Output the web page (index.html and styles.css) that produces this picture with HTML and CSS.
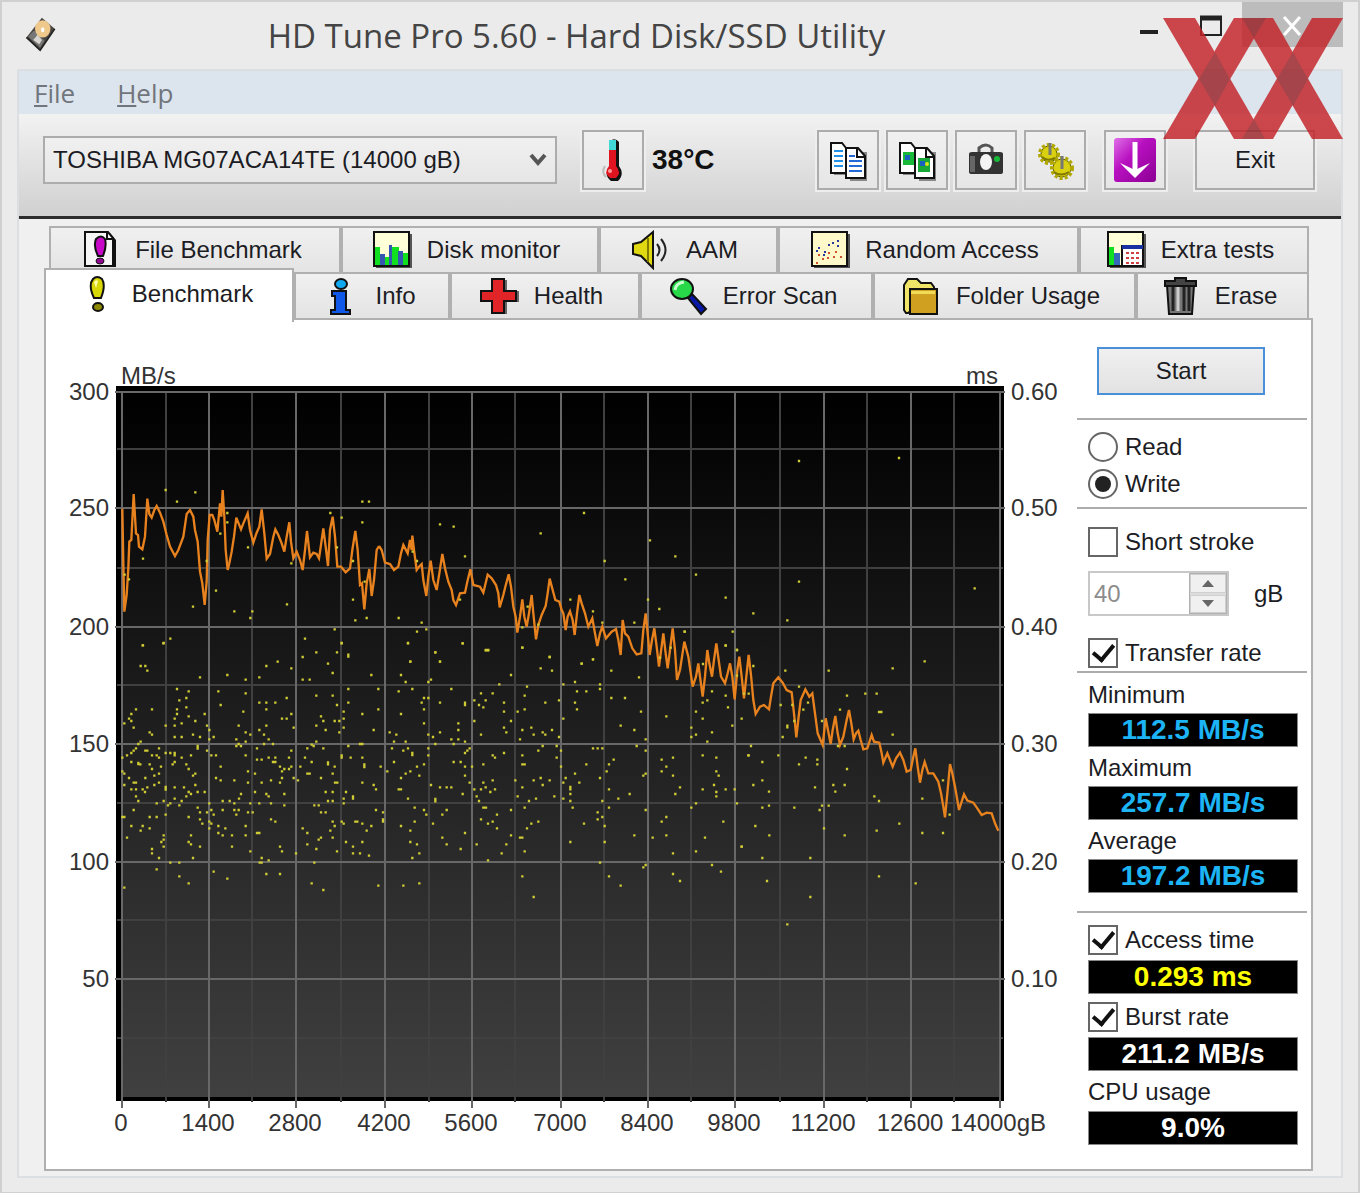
FILE: index.html
```html
<!DOCTYPE html>
<html lang="en">
<head>
<meta charset="utf-8">
<title>HD Tune Pro 5.60 - Hard Disk/SSD Utility</title>
<link rel="stylesheet" href="styles.css">
</head>
<body>
<div class="window">
  <header class="titlebar">
    <svg class="app-icon" viewBox="0 0 36 42" aria-hidden="true">
      <path d="M19 2L34 15 17 40 1 25z" fill="#4a4644"/>
      <path d="M3 24L17 37l5-8-12-12z" fill="#777"/>
      <path d="M9 28l5-6 5 6-3 5z" fill="#d8d4d0"/>
      <ellipse cx="20" cy="15" rx="9" ry="10" fill="#efc98c"/>
      <ellipse cx="20" cy="16" rx="2" ry="3" fill="#fff"/>
      <path d="M1 25l16 15L34 15" fill="none" stroke="#222" stroke-width="2"/>
    </svg>
    <h1>HD Tune Pro 5.60 - Hard Disk/SSD Utility</h1>
    <div class="window-buttons">
      <button type="button" aria-label="Minimize"><svg viewBox="0 0 24 24"><path d="M3 19h18" stroke="#222" stroke-width="4"/></svg></button>
      <button type="button" aria-label="Maximize"><svg viewBox="0 0 24 24"><path d="M2 4h20v18H2z" fill="none" stroke="#222" stroke-width="2"/><path d="M1 5h22" stroke="#222" stroke-width="5"/></svg></button>
      <button type="button" class="close" aria-label="Close"><svg viewBox="0 0 24 24"><path d="M4 4l16 18M20 4L4 22" stroke="#fff" stroke-width="3"/></svg></button>
    </div>
  </header>

  <div class="client">
    <nav class="menubar">
      <a href="#file"><u>F</u>ile</a>
      <a href="#help"><u>H</u>elp</a>
    </nav>

    <div class="toolbar">
      <select class="drive" aria-label="Drive"><option>TOSHIBA MG07ACA14TE (14000 gB)</option></select>
      <button type="button" class="tool" aria-label="Temperature">
        <svg viewBox="0 0 40 44"><path d="M17 3q5-4 9 1v24q6 8-1 15h-7q-8-6-1-15z" fill="#111"/><path d="M16 2h7v12h-7z" fill="#42d8d8"/><path d="M16 12h7v16q6 7 0 12h-6q-7-5-1-12z" fill="#e01420"/><path d="M12 28q-4 6 1 11" stroke="#bbb" stroke-width="2" fill="none"/><circle cx="17" cy="33" r="2" fill="#ff9a9a"/></svg>
      </button>
      <output class="temperature">38°C</output>
      <div class="tools">
        <button type="button" class="tool" aria-label="Copy text">
          <svg viewBox="0 0 40 44"><path d="M6 9h14v28H6zM22 14h17v29H22z" fill="#888"/><path d="M3 5h11l4 5v25H3z" fill="#fff" stroke="#111" stroke-width="2"/><path d="M6 13h9M6 18h9M6 23h9M6 28h9" stroke="#2090e8" stroke-width="2"/><path d="M18 10h12l7 8v22H18z" fill="#fff" stroke="#111" stroke-width="2"/><path d="M29 10v9h8" fill="none" stroke="#111" stroke-width="2"/><path d="M21 18h6M21 23h13M21 28h13M21 33h13" stroke="#2468d8" stroke-width="2"/></svg>
        </button>
        <button type="button" class="tool" aria-label="Copy screenshot">
          <svg viewBox="0 0 40 44"><path d="M6 9h14v28H6zM22 14h17v29H22z" fill="#888"/><path d="M3 5h11l4 5v25H3z" fill="#fff" stroke="#111" stroke-width="2"/><path d="M6 14h11v13H6z" fill="#18b838"/><path d="M8 17h5v5H8z" fill="#1a60c0"/><path d="M18 10h12l7 8v22H18z" fill="#fff" stroke="#111" stroke-width="2"/><path d="M29 10v9h8" fill="none" stroke="#111" stroke-width="2"/><path d="M21 20h12v14H21z" fill="#18a838"/><path d="M23 23h5v5h-5z" fill="#1a60c0"/><circle cx="30" cy="26" r="2" fill="#d8e020"/></svg>
        </button>
        <button type="button" class="tool" aria-label="Save screenshot">
          <svg viewBox="0 0 40 44"><path d="M13 14v-4q7-6 13 0v4" fill="none" stroke="#555" stroke-width="3"/><path d="M3 16q0-2 3-2h28q3 0 3 2v18q0 2-3 2H6q-3 0-3-2z" fill="#333"/><path d="M4 18h5v16H4z" fill="#666"/><ellipse cx="20" cy="24" rx="6" ry="8" fill="#f4f4f4"/><circle cx="31" cy="21" r="3" fill="#18b838"/></svg>
        </button>
        <button type="button" class="tool" aria-label="Options">
          <svg viewBox="0 0 40 44"><g fill="#d8d010" stroke="#5a5600"><circle cx="14" cy="16" r="8"/><circle cx="27" cy="30" r="9"/></g><g fill="none" stroke="#b0a800" stroke-width="4" stroke-dasharray="3 2"><circle cx="14" cy="16" r="9"/><circle cx="27" cy="30" r="10"/></g><path d="M15 5v12M27 18v13" stroke="#777" stroke-width="3"/><path d="M7 19q5 5 13 1M19 34q7 5 15 0" fill="none" stroke="#807800" stroke-width="2"/></svg>
        </button>
        <button type="button" class="tool spaced" aria-label="Minimize to tray">
          <svg class="wide" viewBox="0 0 44 46"><defs><linearGradient id="violet" x2="1" y2="1"><stop offset="0" stop-color="#e070e8"/><stop offset=".4" stop-color="#b810c0"/><stop offset="1" stop-color="#8c0094"/></linearGradient></defs><rect x="1" y="1" width="42" height="44" rx="3" fill="url(#violet)"/><path d="M22 5v31" stroke="#fff" stroke-width="5"/><path d="M7 26l15 7 15-7-15 15z" fill="#fff"/></svg>
        </button>
        <button type="button" class="exit">Exit</button>
      </div>
    </div>

    <main class="content">
      <div class="tabs back" role="tablist" aria-label="More tests">
        <button type="button" role="tab">
          <svg viewBox="0 0 40 40"><path d="M6 3h24l6 7v27H6z" fill="#111"/><path d="M5 2h23l5 6v28H5z" fill="#f6f6f6" stroke="#111" stroke-width="2"/><path d="M27 2v7h6" fill="none" stroke="#111" stroke-width="2"/><path d="M16 9q5-5 9 0 2 7-2 17h-5q-5-10-2-17z" fill="#c808c8" stroke="#111" stroke-width="2"/><ellipse cx="20" cy="31" rx="4" ry="3" fill="#900890" stroke="#111"/></svg>
          File Benchmark</button>
        <button type="button" role="tab">
          <svg viewBox="0 0 40 40"><path d="M4 4h36v34H4z" fill="#555"/><path d="M2 2h35v34H2z" fill="#ffffd8" stroke="#111" stroke-width="2"/><path d="M3 17h5v18H3zM12 27h6v8h-6zM19 17h8v18h-8zM31 23h5v12h-5z" fill="#10e020"/><path d="M8 24h5v11H8zM17 15h3v20h-3zM26 21h5v14h-5z" fill="#3458b0"/></svg>
          Disk monitor</button>
        <button type="button" role="tab">
          <svg viewBox="0 0 40 40"><path d="M2 14l8-2L22 2v36L10 26l-8-2z" fill="#e0d810" stroke="#111" stroke-width="2"/><path d="M17 8v24" stroke="#827c00" stroke-width="2"/><path d="M26 14q5 6 0 12M30 9q9 11 0 22" fill="none" stroke="#222" stroke-width="2"/></svg>
          AAM</button>
        <button type="button" role="tab">
          <svg viewBox="0 0 40 40"><path d="M4 4h36v34H4z" fill="#555"/><path d="M2 2h35v34H2z" fill="#fff8c8" stroke="#111" stroke-width="2"/><path d="M9 18h0M15 22h0M19 15h0M23 13h0M28 11h0M14 25h0M28 16h0M7 21h0" stroke="#2838a0" stroke-width="2" stroke-linecap="square"/><path d="M7 33h0M13 29h0M18 28h0M19 23h0M26 22h0M24 27h0M31 27h0M9 25h0" stroke="#d05030" stroke-width="2" stroke-linecap="square"/></svg>
          Random Access</button>
        <button type="button" role="tab">
          <svg viewBox="0 0 40 40"><path d="M4 4h36v34H4z" fill="#555"/><path d="M2 2h35v34H2z" fill="#ffffd8" stroke="#111" stroke-width="2"/><path d="M3 17h5v18H3z" fill="#10e020"/><path d="M8 23h6v12H8z" fill="#3468b8"/><path d="M16 16h21v20H16z" fill="#fff" stroke="#111" stroke-width="2"/><path d="M16 17h21" stroke="#1830a0" stroke-width="4"/><path d="M20 23h14M20 28h14M20 33h14" stroke="#d04040" stroke-width="2" stroke-dasharray="3 2"/></svg>
          Extra tests</button>
      </div>
      <div class="tabs front" role="tablist" aria-label="Tests">
        <button type="button" role="tab" class="active" aria-selected="true">
          <svg viewBox="0 0 40 40"><path d="M16 5q4-4 9 0 4 6-1 19h-7q-6-13-1-19z" fill="#d8d808" stroke="#111" stroke-width="2"/><path d="M17 8q2-3 4-1l-2 7z" fill="#ffffb0"/><ellipse cx="21" cy="33" rx="5" ry="4" fill="#8c8800" stroke="#111" stroke-width="2"/></svg>
          Benchmark</button>
        <button type="button" role="tab">
          <svg viewBox="0 0 40 40"><ellipse cx="21" cy="8" rx="6" ry="5" fill="#10a8f0" stroke="#111" stroke-width="2"/><path d="M12 15h14v19h4v4H11v-4h4V20h-3z" fill="#1058e8" stroke="#111" stroke-width="2"/></svg>
          Info</button>
        <button type="button" role="tab">
          <svg viewBox="0 0 40 40"><path d="M14 4h14v11h12v11H28v12H16V26H4V15h10z" fill="#666"/><path d="M13 3h12v12h12v10H25v12H13V25H2V15h11z" fill="#e02428" stroke="#111" stroke-width="2"/></svg>
          Health</button>
        <button type="button" role="tab">
          <svg viewBox="0 0 40 40"><path d="M20 22l4-4 14 15-5 5z" fill="#0818a8" stroke="#111" stroke-width="2"/><ellipse cx="14" cy="13" rx="11" ry="10" fill="#28d848" stroke="#111" stroke-width="2"/><path d="M7 14q1-7 9-8" fill="none" stroke="#c8ffd0" stroke-width="3"/></svg>
          Error Scan</button>
        <button type="button" role="tab">
          <svg viewBox="0 0 40 40"><path d="M7 37h-2l-2-3V9l4-6h9l4 4h10l3 4v6z" fill="#f0e468" stroke="#111" stroke-width="2"/><path d="M9 13h27v25H9z" fill="#d0a020" stroke="#111" stroke-width="2"/><path d="M10 15h24v3H10z" fill="#f0dc58"/></svg>
          Folder Usage</button>
        <button type="button" role="tab">
          <svg viewBox="0 0 40 40"><path d="M7 9h27l-2 29H9z" fill="#777" stroke="#111" stroke-width="2"/><path d="M13 11v24M24 11v24M29 11v24" stroke="#222" stroke-width="3"/><path d="M18 11v24" stroke="#ccc" stroke-width="3"/><path d="M5 5h10V2h11v3h10v5H5z" fill="#444" stroke="#111" stroke-width="2"/></svg>
          Erase</button>
      </div>

      <section class="panel">
        <svg class="chart" viewBox="46 320 1031 847" role="img" aria-label="Transfer rate and access time over disk position">
          <defs><linearGradient id="plot" x2="0" y2="1"><stop offset="0" stop-color="#000"/><stop offset="1" stop-color="#404040"/></linearGradient></defs>
          <rect x="116" y="386" width="888" height="715"/>
          <rect x="122" y="391" width="878" height="706" fill="url(#plot)"/>
          <path class="minor" d="M166 391v711M252 391v711M341 391v711M429 391v711M515 391v711M604 391v711M691 391v711M780 391v711M867 391v711M954 391v711M117 449h886M117 568h886M117 685h886M117 803h886M117 920h886M117 1038h886"/>
          <path class="major" d="M122 391v717M209 391v717M296 391v717M385 391v717M472 391v717M561 391v717M648 391v717M735 391v717M824 391v717M911 391v717M1000 391v717M115 392h890M115 508h890M115 627h890M115 744h890M115 862h890M115 979h890"/>
          <!-- Samples use a grid three times finer than the axes, one group per zone. -->
          <g class="rate">
            <path transform="translate(60 350) scale(.33333)" d="M187 476L190 640 193 785 200 735 205 655 208 575 214 570 221 432 228 550 234 555 237 590 247 598 255 560 262 446 268 492 275 503 283 480 290 468 300 488 310 515 320 555 330 590 345 618 355 600 370 560 380 492 390 480 400 500 405 540 413 575 420 665 427 700 434 765 440 695 443 570 449 495 457 495 463 510 472 545 480 460 484 500 488 420 493 500 497 600 503 660 508 640 515 605 522 560 529 503 543 538 550 520 563 490 570 540 580 578 590 548 598 530 605 478 613 550 620 626 630 612 640 560 646 538 655 555 665 580 673 605 680 560 688 517 693 575 700 625 710 605 720 630 728 660 735 600 741 543 750 622 760 608 770 612 777 625 783 585 790 535 797 590 804 648 810 540 818 500 825 560 832 650 843 650 857 667 870 655 877 600 886 543 893 600 900 705 906 700 913 778 920 700 928 657 935 738 942 690 950 600 957 588"/>
            <path transform="translate(370 470) scale(.33333)" d="M27 228L35 240 45 278 60 282 72 300 85 290 93 250 100 225 113 250 120 210 125 240 127 197 132 240 140 300 147 290 155 282 160 330 169 378 175 320 182 272 190 330 200 360 208 310 217 252 225 295 235 335 245 360 250 390 258 405 270 370 285 368 292 335 301 298 310 345 330 350 340 368 353 314 365 325 378 345 385 370 389 412 400 375 406 350 416 313 423 350 430 410 437 440 442 488 450 440 457 388 463 440 470 470 477 430 485 375 490 430 498 508 505 465 515 435 527 408 533 370 539 326 548 360 556 390 568 395 575 420 580 430 587 480 593 440 600 424 608 450 614 495 621 430 628 375 635 400 645 430 655 470 667 445 675 490 682 528 690 490 697 470 708 505 725 485 738 477 745 510 752 555 758 450 765 490 775 500 787 535 800 553 814 550 820 480 827 430 835 510 839 555 846 510 853 475 860 530 867 590 880 490 887 550 893 595 900 540 908 475 915 540 921 630 930 600"/>
            <path transform="translate(680 560) scale(.33333)" d="M0 330L13 245 25 290 38 380 48 350 55 310 60 350 68 410 75 350 82 270 88 310 96 350 102 300 109 250 116 300 123 350 135 370 143 340 150 310 157 350 164 418 172 330 178 290 185 350 192 415 199 350 206 285 213 345 220 420 227 462 240 440 252 435 267 448 273 410 280 370 295 352 308 368 320 390 335 397 343 470 349 532 356 470 362 420 376 388 388 410 397 400 405 460 413 520 428 555 437 475 444 510 452 552 458 510 466 468 473 520 480 555 490 530 500 480 507 450 514 490 521 538 528 520 535 512 542 540 550 568 562 565 575 525 582 545 598 548 605 580 610 608 622 580 638 620 648 595 660 578 670 600 680 635 692 630 700 590 706 565 713 620 720 668 727 630 734 606 745 640 760 640 775 665 783 700 790 740 795 772 802 700 810 612 817 640 825 680 832 720 837 750 845 725 852 703 862 722 880 728 892 745 905 765 920 758 935 760 945 790 955 812"/>
          </g>
          <g class="access">
            <path transform="translate(60 350) scale(.33333)" d="M317 420h0M351 455h0M406 427h0M502 489h0M502 517h0M481 551h0M564 592h0M249 626h0M194 674h0M207 688h0M440 633h0M468 722h0M399 770h0M523 784h0M577 784h0M571 804h0M681 763h0M694 640h0M811 489h0M845 503h0M831 592h0M879 633h0M907 455h0M927 455h0M907 517h0M914 695h0M879 749h0M886 811h0M920 804h0M824 838h0M735 866h0M845 880h0M249 886h0M310 880h0M331 866h0"/>
            <path transform="translate(370 470) scale(.33333)" d="M210 163h0M251 170h0M285 259h0M128 245h0M141 273h0M86 444h0M155 458h0M141 485h0M169 478h0M114 520h0M196 547h0M121 575h0M210 575h0M278 520h0M270 389h0M347 541h7M457 472h0M473 410h0M505 464h0M457 533h0M539 561h0M512 190h0M642 129h0M704 273h0M766 328h0M601 389h0M669 424h0M697 458h0M793 458h0M635 581h0M669 568h0M840 211h0M916 259h0M834 389h0M868 417h0M944 485h0M902 533h0M870 563h0M1287 -27h0M1587 -36h0"/>
            <path transform="translate(680 560) scale(.33333)" d="M48 44h0M137 113h0M220 160h0M357 65h0M322 181h0M884 85h0M14 215h0M158 215h0M137 257h0M171 270h0M69 312h0M220 318h0M316 332h0M446 332h0M638 325h0M734 304h0M171 347h0M357 380h0M302 435h0M192 401h0M206 401h0M384 428h0M370 449h0M337 435h0M343 483h0M322 497v5M308 531h0M501 407h0M556 401h0M590 401h0M597 456h7M480 449h0M426 483h0M638 524h0M474 558h0M494 558h0M501 627h0M295 586h0M357 613h0M377 593h0M412 599h0M412 613h0M405 682h0M460 675h0M494 675h0M466 695h0M583 709h0M597 723h0M727 716h0M789 661h0M809 764h0M727 819h0M789 819h0M658 791h0M590 812h0M494 826h0M432 805h0M419 750h0M426 737h0M446 737h0M343 743h0M268 826h0M267 695h0M247 606h0M247 661h0M220 675h0M247 743h0M267 737h0M226 798h0M213 558h0M206 586h0"/>
            <path transform="translate(740 840) scale(.33333)" d="M5 20h0M67 54h0M211 54h0M81 123h0M211 171h0M142 253h0M417 109h0M527 130h0"/>
            <path transform="translate(110 640) scale(.33333)" d="M98 16h0M161 9h0M92 78h0M106 78h0M112 92h0M270 112h0M352 105h0M407 119h0M448 112h0M469 78h0M503 65h0M544 85h0M578 51h0M619 37h0M681 37h0M695 9h0M715 44v6M654 71h0M668 99h0M578 119h0M599 119h0M784 105h0M894 9h0M901 65h0M873 105h0M887 126h0M955 126h0M201 147h0M236 154h0M229 174h0M208 181h0M229 202h0M201 208h0M201 222h0M194 236h0M236 229h0M256 243h0M215 250h0M194 257h0M167 257h0M284 222h0M291 257h0M298 270h0M78 208h0M126 208h0M64 222h0M57 236h0M64 243h0M43 250h0M71 263h0M119 277h0M126 284h0M194 291h0M215 291h0M249 284h0M270 291h0M311 291h0M298 298h0M325 154h0M407 160h0M332 195h0M400 215h0M386 257h0M407 277h0M421 284h0M448 188h0M469 188h0M496 188h0M530 174h0M469 208h0M544 222h0M516 236h0M530 236h0M469 257h0M448 270h0M462 284h0M476 298h0M551 263h0M619 167h0M668 167h0M715 147h0M805 147h0M681 195h0M715 188h0M701 215h0M757 222h0M805 208h0M633 229h0M640 243h0M619 257h0M674 243h0M688 243h0M701 236h0M701 263h0M688 277h0M647 270h0M791 270h0M866 154h0M907 147h0M942 174h0M955 174h0M935 188h0M942 208h0M873 222h0M942 250h0M839 277h0M859 284h0M955 284h0M852 305h0M887 305h0M92 305h0M85 312h0M78 325h0M71 332h0M64 339h0M51 346h0M37 353h0M106 332h6M147 325h0M126 346h0M140 346h0M147 353h0M167 339h0M181 339h0M194 339v7M215 353h0M243 346h0M263 318v8M291 332h0M304 346h0M318 346h0M64 366h0M85 369v3M91 373h0M119 373h0M126 387h0M153 380h0M188 373h0M194 366h0M229 373h0M236 387h0M332 380h0M37 394h0M43 401h0M57 414h0M106 414h0M133 407h0M147 401h0M249 407h0M256 401h0M318 414h0M332 421h0M373 421h0M71 428h7M43 435h0M64 448h0M78 448h0M98 448h0M112 442h0M133 435h0M147 428h0M105 456h0M78 469h0M167 441v8M194 442h0M222 442h0M256 435h0M263 456h0M236 456h0M243 462h0M229 469h0M284 456h0M194 476h0M215 483h0M208 496h0M85 483h0M161 483h0M140 490h0M174 496h0M181 490h0M298 490h0M338 483h0M359 483h0M373 490h0M387 476h0M393 462h0M421 490h0M448 490h0M483 490h0M379 298h0M379 318h0M386 312h0M393 318h0M407 305h0M407 346h0M462 312h0M489 312h0M441 325h0M441 359h0M455 359h0M476 353h0M496 353h0M489 366h7M510 380h0M523 387h0M516 394h0M537 387h0M544 380h0M537 353h0M544 332h0M571 380h0M414 394h0M435 401h0M414 428h0M455 428h0M483 421h0M516 414h0M510 428h0M551 414h0M564 421h0M435 456h0M469 462h0M476 469h0M523 462h0M523 496h0M619 305h0M605 314h0M611 318h0M592 325h0M585 353h0M605 366h0M640 325h0M715 318h0M750 312h7M695 346v7M722 353h0M757 353h0M654 367v6M674 380h0M763 373v8M592 401h7M633 414h0M668 401h0M675 428h7M757 428h0M791 435h0M798 448h0M812 380h0M832 394h0M647 456h0M668 456h0M708 456h0M729 469v7M701 476h0M701 490h0M654 483h0M668 483h0M613 496h0M626 496h0M633 517h0M647 517h0M846 325h0M880 332h0M894 325h0M907 339v6M955 325h0M955 346h0M852 366h0M942 373h0M921 380h0M928 407h0M901 394h0M887 401h0M873 414h0M866 448h7M894 476h0M914 503h0M942 510h0M949 524h0M914 545h0M798 510h0M819 517h0M819 538v7M71 510h0M37 531h6M119 531h0M140 531h0M167 524h0M236 531h0M263 503h0M270 517h0M291 517h0M304 510h0M311 524h0M270 538h0M277 551h0M298 545h0M304 551h0M298 565h0M338 510h0M373 510h0M386 510h0M379 524h0M414 517h0M428 517h0M483 538h0M496 545h0M325 558h0M346 565h0M325 579h0M338 586h0M366 586h0M407 558h0M407 586h0M441 579h7M64 558h0M98 558h0M92 572h0M119 565h0M51 593h0M161 586h0M161 599h0M154 606h0M161 620h0M126 627h0M126 640h0M147 654h0M181 668h0M208 668h0M249 654h0M243 586h0M236 606h0M243 613h0M270 620h0M366 620h0M421 634h0M455 654h0M449 668h6M476 661h0M510 620h0M516 634h0M558 640h0M578 565h0M592 579h0M592 613h0M619 627h0M626 599h0M633 593h0M661 572h0M668 593h0M674 558h0M668 545h0M695 545h0M701 551h0M736 545h6M757 551h0M784 558h0M770 572h0M708 606h0M757 606h0M729 620h0M681 634h0M729 640h0M750 640h0M777 647h0M613 668h0M873 558h0M901 572h0M901 606h0M921 613h0M928 640h0M907 654h0M140 688h0M208 709h0M236 730h0M311 695h0M352 716h0M469 702h0M510 702h0M605 730h0M640 750h0M805 737h0M880 737h0M928 730h0M43 743h0"/>
            <path transform="translate(430 640) scale(.33333)" d="M98 10h0M168 30h7M16 37h0M30 65h0M277 23h0M359 51h0M332 85h0M366 92h0M455 71h0M489 58h0M243 105h0M3 119h0M544 92h0M627 112h0M64 147h0M208 133h0M291 140h0M400 133h0M435 126h0M510 133h0M510 147h0M153 160h0M188 160h0M284 167h0M441 154h0M469 154h0M544 174h0M585 174h0M30 188h0M105 188v7M133 181h0M167 181h0M147 195h0M160 202h0M222 188h0M346 188h0M387 181h0M435 188h0M441 208h0M222 215h0M263 215h0M284 208h0M633 215h0M709 229h0M85 250h0M133 243h0M243 243h0M400 236h0M30 277h0M85 270h0M222 263h0M229 277h0M277 270h0M304 263h0M311 284h0M338 277h0M346 284h0M366 270h0M153 284h0M9 291h0M64 298h0M85 298h0M105 305h0M71 312h0M16 312h0M270 298h0M387 291h0M572 257h0M613 270h0M647 298h0M338 318h0M325 332h0M380 318h0M393 332h0M489 325h0M503 325h0M517 325h0M620 318h0M647 332h0M119 325h0M112 332h0M105 339h0M222 339h0M188 346h0M195 353h0M277 346h0M380 353h0M71 366h0M92 366h0M105 380h0M126 380h0M160 373h0M277 373h7M393 380h0M469 373h0M537 373h0M551 359h0M530 394h0M105 407h0M435 401h0M407 414h0M400 428h0M448 428h0M510 414h0M119 428h0M160 428h0M188 421h0M256 421h0M311 421h0M332 414h0M359 421h0M338 435h0M640 407h0M647 401h0M3 435h0M30 442h0M50 442h0M64 442h0M133 448h0M153 448h0M167 442h0M195 448h0M181 456h0M277 442h0M421 441v7M421 462h0M537 448h0M98 462h0M140 469h0M263 469h0M373 469h0M400 476h0M599 462h0M565 476h0M16 477v7M147 483h0M297 483h0M318 476h0M421 483h0M517 483h0M160 503h8M243 510h0M284 503h0M428 503h0M537 503h0M50 510h0M37 524h0M201 524h0M153 538h0M9 551h0M174 551h0M188 545h0M503 517h0M517 531h0M503 538h0M524 558h0M325 545h0M304 551h0M291 565h0M201 565h0M462 551h0M105 579h0M37 593h0M243 586h0M270 593h7M613 586h0M668 593h0M50 613h0M140 613h0M229 613h0M421 606h0M524 606h0M92 627h0M215 640h0M284 634h0M174 661h0M510 668h0M277 709h0M311 771h0M537 709h0M572 737h0M647 675h0M640 682h0M729 702h0M750 723h0M846 675h0M873 695h0M729 640h0M798 634h0M647 510h0M695 545h0M709 531h0M709 586h0M825 593h0M880 545h0M935 620h0M784 503h0M798 490h0M921 490h0M914 448h0M887 448h0M859 456h0M859 469h0M852 435h0M866 407h0M859 394h0M859 353h0M818 346h0M818 448h0M736 462h0M750 442h0M729 407h0M695 394h0M709 380h0M695 359h0M729 353h0M832 305h0M784 291h0M798 284h0M784 263h0M846 277h0M818 236h0M798 215h0M907 257h0M935 236h0M894 202h0M887 167h0M846 154h0M818 188h0M832 181h0M887 16h0M921 30h0M955 346h0"/>
          </g>
          <g class="units"><text x="121" y="384">MB/s</text><text x="998" y="384" text-anchor="end">ms</text></g>
          <g class="left-scale"><text x="109" y="400">300</text><text x="109" y="516">250</text><text x="109" y="635">200</text><text x="109" y="752">150</text><text x="109" y="870">100</text><text x="109" y="987">50</text></g>
          <g class="right-scale"><text x="1011" y="400">0.60</text><text x="1011" y="516">0.50</text><text x="1011" y="635">0.40</text><text x="1011" y="752">0.30</text><text x="1011" y="870">0.20</text><text x="1011" y="987">0.10</text></g>
          <g class="bottom-scale"><text x="121" y="1131">0</text><text x="208" y="1131">1400</text><text x="295" y="1131">2800</text><text x="384" y="1131">4200</text><text x="471" y="1131">5600</text><text x="560" y="1131">7000</text><text x="647" y="1131">8400</text><text x="734" y="1131">9800</text><text x="823" y="1131">11200</text><text x="910" y="1131">12600</text><text x="998" y="1131">14000gB</text></g>
        </svg>

        <form class="side">
          <button type="button" class="start">Start</button>
          <div class="group">
            <label class="check"><input type="radio" name="mode">Read</label>
            <label class="check"><input type="radio" name="mode" checked>Write</label>
          </div>
          <div class="group stroke">
            <label class="check"><input type="checkbox">Short stroke</label>
            <div class="spin">
              <span class="spinner">
                <input type="text" id="size" value="40" disabled>
                <span class="arrows">
                  <button type="button" disabled aria-label="Increase"><svg viewBox="0 0 12 7"><path d="M0 7l6-7 6 7z" fill="#666"/></svg></button>
                  <button type="button" disabled aria-label="Decrease"><svg viewBox="0 0 12 7"><path d="M0 0l6 7 6-7z" fill="#666"/></svg></button>
                </span>
              </span>
              <label for="size">gB</label>
            </div>
            <label class="check"><input type="checkbox" checked>Transfer rate</label>
          </div>
          <div class="group results">
            <label for="min">Minimum</label><output id="min">112.5 MB/s</output>
            <label for="max">Maximum</label><output id="max">257.7 MB/s</output>
            <label for="avg">Average</label><output id="avg">197.2 MB/s</output>
          </div>
          <div class="group extras">
            <label class="check"><input type="checkbox" checked>Access time</label><output class="yellow">0.293 ms</output>
            <label class="check"><input type="checkbox" checked>Burst rate</label><output class="white">211.2 MB/s</output>
            <label for="cpu">CPU usage</label><output id="cpu" class="white">9.0%</output>
          </div>
        </form>
      </section>
    </main>
  </div>

  <svg class="logo" viewBox="0 0 180 121" aria-hidden="true">
    <g fill="#c42228">
      <path d="M0 0h32l70 121H71z"/><path d="M71 0h32L32 121H0z"/>
      <path d="M79 0h31l70 121h-31z"/><path d="M149 0h31l-70 121H79z"/>
    </g>
    <path fill="#9a2228" d="M52 34l15 27-15 27-16-27zM130 34l15 27-15 27-16-27zM79 0h24L91 20zM79 121h23l-11-20z"/>
  </svg>
</div>
</body>
</html>
```
FILE: styles.css
```css
* { box-sizing: border-box; }

body {
  margin: 0;
  background: #ebebeb;
  color: #1c1c24;
  font-family: "Liberation Sans", sans-serif;
  font-size: 24px;
  line-height: 34px;
}

button, input, select { font: inherit; color: inherit; margin: 0; }
button { padding: 0; }
svg { display: block; }

.window {
  position: relative;
  min-height: 100vh;
  padding: 0 15px 14px;
  border: 2px solid #d0d0d0;
  background: #ebebeb;
}

.titlebar {
  display: flex;
  height: 67px;
}
.app-icon { width: 36px; height: 36px; margin: 14px 0 0 6px; }
.titlebar h1 {
  margin: 12px auto 0;
  padding-right: 24px;
  color: #444;
  font: 400 33px/44px "Open Sans", "Noto Sans", sans-serif;
}
.window-buttons { display: flex; height: 45px; }
.window-buttons button {
  display: grid;
  place-items: center;
  width: 62px;
  border: 0;
  background: none;
}
.window-buttons svg { width: 24px; height: 24px; }
.window-buttons .close { width: 101px; background: #bcbcbc; }

.client { border: 2px solid #dcdfe2; background: #f0f0f0; }

.menubar {
  display: flex;
  gap: 42px;
  height: 43px;
  padding: 4px 15px;
  background: #dce4ed;
  font: 400 26px/36px "Open Sans", "Noto Sans", sans-serif;
}
.menubar a { color: #71757c; text-decoration: none; }

.toolbar {
  display: flex;
  align-items: center;
  height: 105px;
  padding: 0 26px 10px 24px;
  border-bottom: 3px solid #2c2c2c;
  background: linear-gradient(#f2f2f2, #d0d0d0);
}
.drive {
  width: 514px;
  height: 48px;
  padding: 0 8px;
  border: 2px solid #acacac;
  border-radius: 0;
  appearance: none;
  background: url("data:image/svg+xml,%3Csvg xmlns='http://www.w3.org/2000/svg' width='18' height='14'%3E%3Cpath d='M2 2l7 8 7-8' fill='none' stroke='%23555' stroke-width='4'/%3E%3C/svg%3E") no-repeat right 8px center, linear-gradient(#f0f0f0, #e6e6e6);
}
.tool, .exit {
  display: grid;
  place-items: center;
  width: 62px;
  height: 60px;
  border: 2px solid #acacac;
  outline: 2px solid #eee;
  background: linear-gradient(#f0f0f0, #e6e6e6);
}
.drive + .tool { margin-left: 25px; }
.tool svg { width: 40px; height: 44px; }
.tool .wide { width: 44px; height: 46px; }
.temperature { margin-left: 8px; color: #111; font-size: 28px; font-weight: 700; }
.tools { display: flex; gap: 7px; margin-left: auto; }
.spaced { margin-left: 11px; }
.exit { width: 120px; margin-left: 22px; }

.content { padding: 7px 28px 5px 25px; }

.tabs { display: grid; margin: 0 4px 0 5px; }
.back { grid-template-columns: 292fr 258fr 179fr 301fr 230fr; }
.front { grid-template-columns: 245fr 156fr 190fr 233fr 263fr 173fr; }
.tabs button {
  display: flex;
  align-items: center;
  justify-content: center;
  gap: 15px;
  height: 46px;
  padding-right: 8px;
  border: solid #b0b0b0;
  border-width: 2px 2px 0;
  background: linear-gradient(#f0f0f0, #e4e4e4);
  white-space: nowrap;
}
.tabs svg { width: 40px; height: 40px; }
.tabs .active {
  z-index: 1;
  height: 54px;
  margin: -4px 0 -4px -5px;
  padding-bottom: 5px;
  border-color: #b0b0b0;
  background: #fff;
}

.panel {
  display: grid;
  grid-template-columns: minmax(0, 1fr) 234px;
  border: 2px solid #b0b0b0;
  background: #fff;
}

.chart { width: 100%; }
.chart text { fill: #333; font: 24px "Liberation Sans", sans-serif; }
.left-scale { text-anchor: end; }
.bottom-scale { text-anchor: middle; }
.minor { stroke: #404040; stroke-width: 2; }
.major { stroke: #686868; stroke-width: 2; }
.rate path { fill: none; stroke: #e8821e; stroke-width: 7; }
.access path { fill: none; stroke: #d0cc34; stroke-width: 7; stroke-linecap: square; }

.side { padding: 27px 4px 0 0; }
.start {
  display: block;
  width: 168px;
  height: 48px;
  margin: 0 0 23px 20px;
  border: 2px solid #4a90d9;
  background: linear-gradient(#f0f0f0, #e2e2e2);
}
.group {
  display: flex;
  flex-direction: column;
  padding: 8px 9px 5px 11px;
  border-top: 2px solid #acacac;
}
.check { display: flex; align-items: center; gap: 7px; height: 37px; }
.check input {
  display: grid;
  place-items: center;
  width: 30px;
  height: 30px;
  border: 2px solid #666;
  appearance: none;
  background: #fff;
}
.check [type="radio"] { border-radius: 50%; }
.check [type="radio"]:checked::before {
  width: 16px;
  height: 16px;
  border-radius: 50%;
  background: #222;
  content: "";
}
.check [type="checkbox"]:checked::before {
  width: 9px;
  height: 17px;
  margin-bottom: 5px;
  border: solid #111;
  border-width: 0 4px 4px 0;
  transform: rotate(40deg);
  content: "";
}
.stroke { padding-top: 14px; padding-bottom: 0; }
.spin { display: flex; align-items: center; gap: 25px; margin: 11px 0 18px; }
.spinner { display: flex; width: 141px; height: 45px; border: 2px solid #c8c8c8; }
.spinner input {
  flex: 1;
  min-width: 0;
  padding: 0 4px;
  border: 0;
  background: #fff;
  color: #8c8c8c;
}
.arrows { display: grid; width: 38px; border: 1px solid #b0b0b0; background: #ddd; gap: 2px; }
.arrows button { display: grid; place-items: center; border: 1px solid #d0d0d0; background: #f0f0f0; }
.arrows svg { width: 12px; height: 7px; }

output { display: block; }
.group output {
  height: 34px;
  border: 1px solid #888;
  background: #000;
  color: #1cb4f4;
  font: 700 28px/32px "Liberation Sans", sans-serif;
  text-align: center;
}
.results { padding: 5px 9px 18px 11px; }
.results label { margin-bottom: 1px; }
.results output { margin-bottom: 4px; }
.results output:last-child { margin-bottom: 0; }
.extras { padding-bottom: 20px; }
.extras output { margin-bottom: 4px; }
.extras label { margin-bottom: 2px; }
.group .yellow { color: #ff0; }
.group .white { color: #fff; }

.logo {
  position: absolute;
  top: 16px;
  right: 15px;
  width: 180px;
  height: 121px;
  opacity: .82;
  pointer-events: none;
}
```
